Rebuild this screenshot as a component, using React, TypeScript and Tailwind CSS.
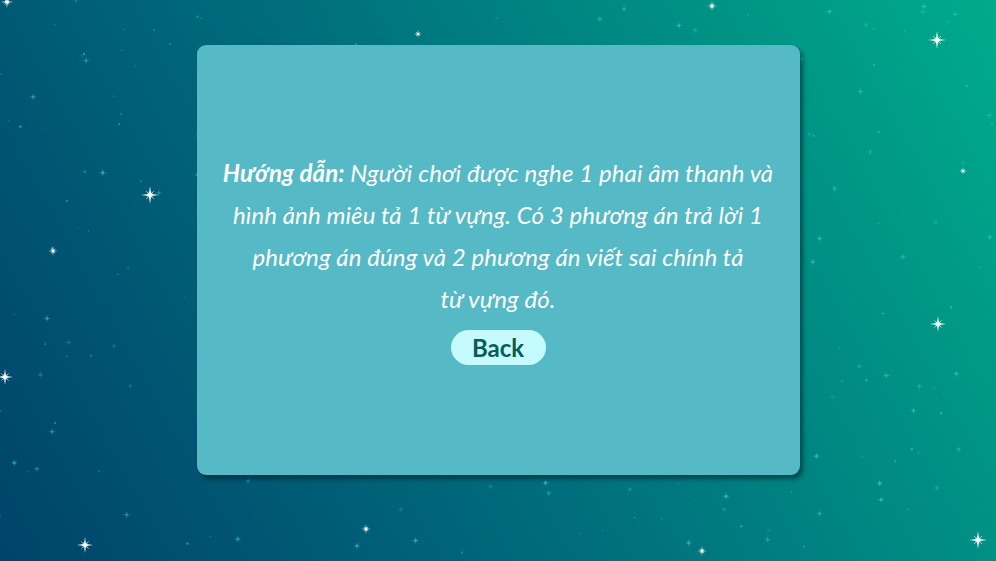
import React from "react";

const sparkles = [
  [150, 195, 9],
  [5, 377, 8],
  [85, 545, 8],
  [937, 40, 9],
  [938, 324, 8],
  [978, 540, 9],
  [712, 6, 5],
  [418, 34, 4],
  [53, 251, 5],
  [366, 529, 5],
  [702, 551, 5],
  [963, 171, 4],
  [7, 2, 6],
];

function makeDots() {
  let seed = 7;
  const rnd = () => {
    seed = (seed * 16807) % 2147483647;
    return seed / 2147483647;
  };
  const dots: { x: number; y: number; r: number; o: number }[] = [];
  for (let i = 0; i < 260; i++) {
    dots.push({ x: rnd() * 996, y: rnd() * 561, r: 0.6 + rnd() * 1.1, o: 0.2 + rnd() * 0.5 });
  }
  return dots;
}

const dots = makeDots();

function StarField() {
  return (
    <svg className="absolute inset-0" width="996" height="561" viewBox="0 0 996 561">
      <defs>
        <linearGradient id="sky" x1="0" y1="561" x2="996" y2="0" gradientUnits="userSpaceOnUse">
          <stop offset="0" stopColor="#00436a" />
          <stop offset="0.45" stopColor="#006d7c" />
          <stop offset="1" stopColor="#00ab8b" />
        </linearGradient>
        <radialGradient id="glow">
          <stop offset="0" stopColor="#ffffff" stopOpacity="0.9" />
          <stop offset="1" stopColor="#ffffff" stopOpacity="0" />
        </radialGradient>
      </defs>
      <rect width="996" height="561" fill="url(#sky)" />
      {dots.map((d, i) => (
        <g key={i} opacity={d.o}>
          <circle cx={d.x} cy={d.y} r={d.r} fill="#2fd6d0" />
          {d.r > 1.3 && (
            <path
              d={`M${d.x - 3} ${d.y}H${d.x + 3}M${d.x} ${d.y - 3}V${d.y + 3}`}
              stroke="#2fd6d0"
              strokeWidth="0.6"
            />
          )}
        </g>
      ))}
      {sparkles.map(([x, y, s], i) => (
        <g key={i}>
          <circle cx={x} cy={y} r={s * 0.45} fill="url(#glow)" />
          <path
            d={`M${x} ${y - s}L${x + s * 0.12} ${y - s * 0.12}L${x + s} ${y}L${x + s * 0.12} ${y + s * 0.12}L${x} ${y + s}L${x - s * 0.12} ${y + s * 0.12}L${x - s} ${y}L${x - s * 0.12} ${y - s * 0.12}Z`}
            fill="#ffffff"
          />
          <path
            d={`M${x - s * 0.45} ${y - s * 0.45}L${x + s * 0.45} ${y + s * 0.45}M${x + s * 0.45} ${y - s * 0.45}L${x - s * 0.45} ${y + s * 0.45}`}
            stroke="#ffffff"
            strokeWidth="0.7"
            opacity="0.8"
          />
          <circle cx={x} cy={y} r={s * 0.2} fill="#ffffff" />
        </g>
      ))}
    </svg>
  );
}

export default function App() {
  return (
    <div className="relative w-[996px] h-[561px] overflow-hidden font-['Lato',sans-serif]">
      <StarField />
      <div className="relative flex justify-center pt-[45px]">
        <div className="w-[603px] h-[430px] rounded-[9px] bg-[#55b9c6] shadow-[3px_4px_4px_rgba(0,20,30,0.5)] flex flex-col items-center justify-center px-3">
          <p className="text-center italic text-white text-[24px] leading-[42px] tracking-[0.1px] -mt-[3px] whitespace-nowrap">
            <span className="font-bold">Hướng dẫn:</span> Người chơi được nghe 1 phai âm thanh và
            <br />
            hình ảnh miêu tả 1 từ vựng. Có 3 phương án trả lời 1
            <br />
            phương án đúng và 2 phương án viết sai chính tả
            <br />
            từ vựng đó.
          </p>
          <button className="mt-[10px] w-[95px] h-[35px] rounded-full bg-[#c5fbfd] text-[#0b5a5a] font-bold text-[24px] leading-none">
            Back
          </button>
        </div>
      </div>
    </div>
  );
}
